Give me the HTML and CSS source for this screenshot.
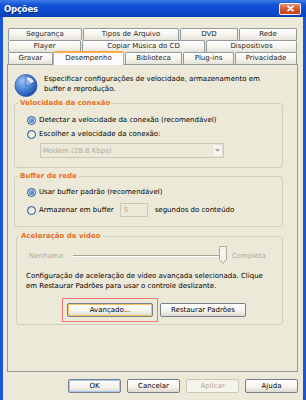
FILE: index.html
```html
<!DOCTYPE html>
<html>

<head>
    <title>Opções</title>
    <link rel="stylesheet" href="styles.css">
</head>

<body>

    <div class="window">
        <div class="titlebar">
            <span class="title">Opções</span>
            <span class="close">
                <svg width="9" height="7" viewBox="0 0 9 7">
                    <path d="M1.5 0.8 L7.5 6.2 M7.5 0.8 L1.5 6.2" stroke="#fff" stroke-width="1.7" />
                </svg>
            </span>
        </div>

        <div class="client">
            <div class="tabs">
                <div class="tab-row">
                    <div class="tab tab-seg">Segurança</div>
                    <div class="tab tab-tipos">Tipos de Arquivo</div>
                    <div class="tab tab-dvd">DVD</div>
                    <div class="tab tab-rede">Rede</div>
                </div>
                <div class="tab-row">
                    <div class="tab tab-player">Player</div>
                    <div class="tab tab-copiar">Copiar Música do CD</div>
                    <div class="tab tab-disp">Dispositivos</div>
                </div>
                <div class="tab-row">
                    <div class="tab tab-gravar">Gravar</div>
                    <div class="tab tab-desemp selected">Desempenho</div>
                    <div class="tab tab-biblio">Biblioteca</div>
                    <div class="tab tab-plug">Plug-ins</div>
                    <div class="tab tab-priv">Privacidade</div>
                </div>
            </div>

            <div class="panel">
                <div class="intro">
                    <svg class="intro-icon" width="24" height="24" viewBox="0 0 24 24">
                        <defs>
                            <radialGradient id="ball" cx="0.35" cy="0.3" r="0.75">
                                <stop offset="0" stop-color="#9cc3f2" />
                                <stop offset="0.55" stop-color="#4a82d6" />
                                <stop offset="1" stop-color="#1b4aa6" />
                            </radialGradient>
                        </defs>
                        <circle cx="12" cy="12.5" r="11" fill="url(#ball)" stroke="#2a58a8" stroke-width="0.8" />
                        <path d="M12 13 L12 3.5 A9.5 9.5 0 0 1 20.6 9 Z" fill="#dfeafb" stroke="#2a5cb4" stroke-width="0.9" />
                        <path d="M13.2 11.6 L13.2 6 L17.6 11.6 Z" fill="#7fa9e6" />
                    </svg>
                    <p>Especificar configurações de velocidade, armazenamento em<br>buffer e reprodução.</p>
                </div>

                <fieldset class="group group-speed">
                    <legend>Velocidade da conexão</legend>
                    <label class="option first"><span class="radio checked"></span>Detectar a velocidade da conexão (recomendável)</label>
                    <label class="option"><span class="radio"></span>Escolher a velocidade da conexão:</label>
                    <div class="select">
                        <span class="select-text">Modem (28.8 Kbps)</span>
                        <span class="select-arrow">
                            <svg width="5" height="3" viewBox="0 0 5 3"><path d="M0 0 H5 L2.5 3 Z" fill="#aca899" /></svg>
                        </span>
                    </div>
                </fieldset>

                <fieldset class="group group-buffer">
                    <legend>Buffer de rede</legend>
                    <label class="option first"><span class="radio checked"></span>Usar buffer padrão (recomendável)</label>
                    <label class="option second"><span class="radio"></span>Armazenar em buffer
                        <span class="spin">5</span>
                        <span class="spin-label">segundos do conteúdo</span>
                    </label>
                </fieldset>

                <fieldset class="group group-video">
                    <legend>Aceleração de vídeo</legend>
                    <div class="slider">
                        <span class="muted">Nenhuma</span>
                        <svg class="track" width="154" height="19" viewBox="0 0 154 19">
                            <line x1="0" y1="9.5" x2="150" y2="9.5" stroke="#a7a697" />
                            <line x1="0" y1="10.5" x2="150" y2="10.5" stroke="#ffffff" />
                            <path d="M146.5 0.5 H153.5 V13 L150 17.5 L146.5 13 Z" fill="#f4f3ee" stroke="#aeab9c" />
                        </svg>
                        <span class="muted">Completa</span>
                    </div>
                    <p class="note">Configuração de aceleração de vídeo avançada selecionada. Clique<br>em Restaurar Padrões para usar o controle deslizante.</p>
                    <div class="group-buttons">
                        <div class="mark">
                            <button class="btn btn-wide hot">Avançado...</button>
                        </div>
                        <button class="btn btn-wide">Restaurar Padrões</button>
                    </div>
                </fieldset>
            </div>

            <div class="actions">
                <button class="btn default">OK</button>
                <button class="btn">Cancelar</button>
                <button class="btn" disabled>Aplicar</button>
                <button class="btn">Ajuda</button>
            </div>
        </div>
    </div>

</body>

</html>
```

FILE: styles.css
```css
body {
    margin: 0;
    font-family: "DejaVu Sans", sans-serif;
    font-size: 7px;
    color: #000;
    background: #ece9d8;
}

.window {
    width: 306px;
    height: 400px;
    overflow: hidden;
}

.titlebar {
    height: 17px;
    display: flex;
    align-items: center;
    justify-content: space-between;
    background: linear-gradient(#3d7ce6, #1252d6 30%, #0a49cc 70%, #0b43b6);
}

.title {
    padding-left: 4px;
    font-family: "DejaVu Sans", sans-serif;
    font-weight: bold;
    font-size: 8.5px;
    color: #fff;
    letter-spacing: -0.2px;
    text-shadow: 1px 1px 0 #0a2f86;
}

.close {
    width: 20px;
    height: 10px;
    margin-right: 5px;
    display: flex;
    align-items: center;
    justify-content: center;
    border: 1px solid #f2f2f2;
    border-radius: 2px;
    background: linear-gradient(#e6927a, #d2582f 50%, #c2411c);
}

.client {
    height: 383px;
    border-left: 3px solid #1d56d2;
    border-right: 3px solid #1d56d2;
    background: #ece9d8;
    overflow: hidden;
}

/* tabs */
.tabs {
    margin: 11px 0 0 5px;
    width: 289px;
}

.tab-row {
    display: flex;
    gap: 1px;
    height: 12px;
}

.tab {
    box-sizing: border-box;
    height: 12px;
    border: 1px solid #919b9c;
    border-bottom: none;
    border-radius: 2px 2px 0 0;
    background: linear-gradient(#ffffff, #f3f2ec 60%, #e4e2d8);
    text-align: center;
    line-height: 11px;
    white-space: nowrap;
    color: #222;
}

.tab-seg { width: 74px; }
.tab-tipos { width: 96px; }
.tab-dvd { width: 58px; }
.tab-rede { width: 58px; }

.tab-player { width: 73px; }
.tab-copiar { width: 123px; }
.tab-disp { width: 91px; }

.tab-gravar { width: 45px; }
.tab-desemp { width: 71px; margin-left: -1px; }
.tab-biblio { width: 57px; }
.tab-plug { width: 51px; }
.tab-priv { width: 62px; }

.tab.selected {
    position: relative;
    z-index: 1;
    height: 14px;
    margin-top: -1px;
    border: 1px solid #f19a92;
    border-top: 2px solid #f7ab4a;
    border-bottom: none;
    background: #fcfcfe;
    line-height: 10px;
}

/* panel */
.panel {
    box-sizing: border-box;
    height: 308px;
    margin-left: 4px;
    width: 291px;
    padding: 8px 14px 0 6px;
    border: 1px solid #919b9c;
    background: #ece9d8;
}

.intro {
    display: flex;
    gap: 6px;
    height: 24px;
}

.intro p {
    margin: 1px 0 0;
    line-height: 10px;
}

.group {
    margin: 0;
    padding: 0 0 9px 0;
    border: 1px solid #d0d0bf;
    border-radius: 3px;
    min-inline-size: 0;
}

.group legend {
    margin-left: 3px;
    padding: 0 2px;
    line-height: 10px;
    font-weight: bold;
    color: #e8701c;
}

.group-speed {
    margin-top: 1px;
}

.group-buffer {
    margin-top: 3px;
}

.group-video {
    margin: 4px 0 0 2px;
    padding-bottom: 2px;
}

.group-video legend {
    margin-left: 2px;
}

.option {
    display: flex;
    align-items: center;
    gap: 2px;
    height: 14px;
    margin: 0 0 0 12px;
    white-space: nowrap;
}

.option.first {
    margin-top: 5px;
}

.group-buffer .option.first {
    margin-top: 4px;
}

.option.second {
    margin-top: 4px;
}

.radio {
    box-sizing: border-box;
    width: 9px;
    height: 9px;
    margin-right: 1px;
    display: inline-flex;
    align-items: center;
    justify-content: center;
    border: 1px solid #1c5180;
    border-radius: 50%;
    background: linear-gradient(135deg, #d6d5ce, #ffffff);
}

.radio.checked::after {
    content: "";
    width: 5px;
    height: 5px;
    border-radius: 50%;
    background: radial-gradient(circle at 35% 35%, #7fb0f5, #2456c6);
}

.select {
    box-sizing: border-box;
    display: flex;
    align-items: center;
    justify-content: space-between;
    width: 184px;
    height: 15px;
    margin: 2px 0 0 25px;
    border: 1px solid #cbc8b8;
    background: #ece9d8;
}

.select-text {
    padding-left: 2px;
    color: #aca899;
}

.select-arrow {
    box-sizing: border-box;
    width: 11px;
    height: 13px;
    display: flex;
    align-items: center;
    justify-content: center;
    border: 1px solid #e6e3d6;
    background: #f5f4ee;
}

.spin {
    box-sizing: border-box;
    width: 28px;
    height: 14px;
    margin-left: 4px;
    padding-left: 3px;
    line-height: 12px;
    border: 1px solid #cbc8b8;
    color: #aca899;
}

.spin-label {
    margin-left: 5px;
}

.muted {
    color: #aca899;
}

.slider {
    display: flex;
    align-items: center;
    height: 19px;
    margin: 5px 0 0 12px;
}

.track {
    margin: 0 5px 0 10px;
}

.note {
    margin: 6px 0 0 9px;
    line-height: 10px;
}

.group-buttons {
    display: flex;
    align-items: center;
    gap: 2px;
    margin: 7px 0 0 45px;
}

.mark {
    padding: 4px;
    border: 1px solid #f07a7a;
}

/* buttons */
.btn {
    box-sizing: border-box;
    width: 53px;
    height: 14px;
    padding: 0;
    font-family: "DejaVu Sans", sans-serif;
    font-size: 7px;
    color: #000;
    border: 1px solid #76808e;
    border-radius: 2px;
    background: linear-gradient(#ffffff, #f4f3ee 60%, #dcd8cc);
}

.btn-wide {
    width: 86px;
}

.btn.hot {
    box-shadow: inset 0 0 0 1px #f7c35c;
}

.btn.default {
    box-shadow: inset 0 0 0 1px #a9c6ee;
}

.btn:disabled {
    color: #aca899;
    border-color: #cac8bb;
    background: #f5f4ea;
}

.actions {
    display: flex;
    justify-content: flex-end;
    gap: 6px;
    margin: 7px 5px 0 0;
}
```
